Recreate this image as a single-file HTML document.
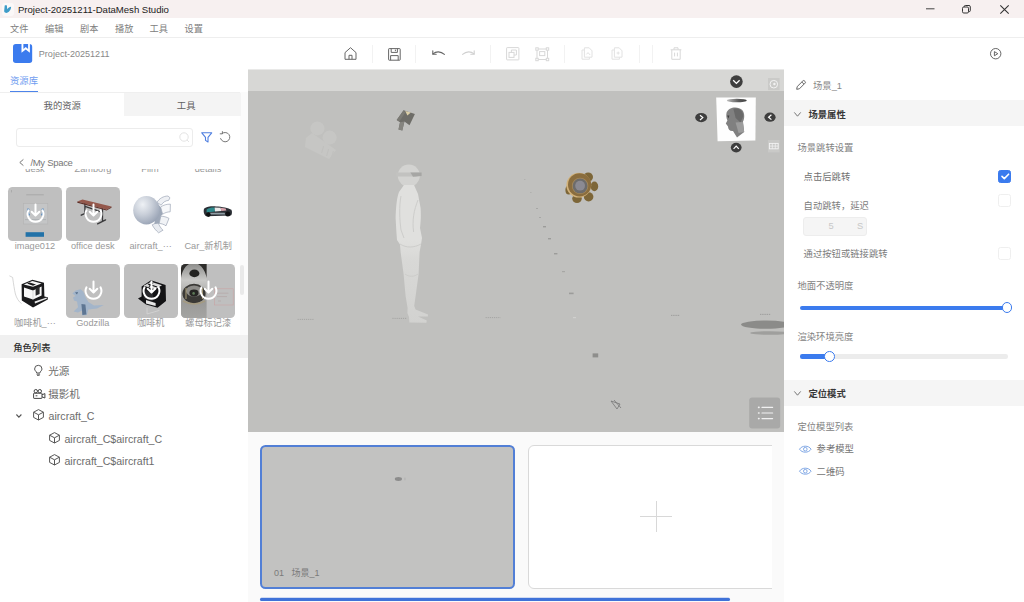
<!DOCTYPE html>
<html lang="zh">
<head>
<meta charset="utf-8">
<title>Project-20251211-DataMesh Studio</title>
<style>
*{box-sizing:border-box;margin:0;padding:0}
html,body{width:1024px;height:602px;overflow:hidden;background:#fff}
body{position:relative;font-family:"Liberation Sans","Noto Sans CJK SC",sans-serif;font-size:9.33px;color:#666}
.a{position:absolute}
.t{position:absolute;white-space:nowrap;line-height:12px;margin-top:-6px}
.c{text-align:center}
svg{position:absolute;overflow:visible}
/* title bar */
#titlebar{left:0;top:0;width:1024px;height:17.5px;background:#f7f0f0}
#menubar{left:0;top:18px;width:1024px;height:19.5px;background:#fff;border-bottom:1px solid #eee}
.menu{color:#808080;font-size:9.2px}
/* left panel */
#left{left:0;top:38px;width:248px;height:564px}
.thumb{position:absolute;width:54px;height:53.6px;border-radius:4.6px;overflow:hidden}
.thumb.g{background:#bfbfbf}
.lbl{position:absolute;width:58px;text-align:center;white-space:nowrap;line-height:12px;color:#999;font-size:9.2px}
.tree{font-size:10.6px;color:#6c6c6c}
/* viewport */
#vp{left:248px;top:70px;width:536px;height:362px;background:#c0c0be;overflow:hidden;box-shadow:0 -1px 0 rgba(215,215,213,.55)}
#vpstrip{left:0;top:0;width:536px;height:20.6px;background:#d7d7d5}
/* timeline */
#tl{left:248px;top:431.5px;width:536px;height:170.5px;background:#fafafa;overflow:hidden}
/* right */
#right{left:784px;top:70px;width:240px;height:532px;background:#fff}
.sec{position:absolute;left:0;width:240px;height:26px;background:#f5f5f5}
.b{font-weight:bold;color:#383838}
.cb{position:absolute;left:214px;width:13px;height:13px;border-radius:2.5px;border:1px solid #efefef;background:#fff}
.cb.on{background:#3b7bee;border-color:#3b7bee}
</style>
</head>
<body>
<!-- TITLE BAR -->
<div id="titlebar" class="a">
  <div class="a" style="left:1.5px;top:2.5px;width:12px;height:13px;border-radius:3px;background:#fff;opacity:.55"></div>
  <svg style="left:0;top:0" width="16" height="18" viewBox="0 0 16 18"><path d="M4.7 5.4 C5.5 5 6.5 5.1 6.9 5.6 L7.2 9.3 C8.2 7.8 9.6 6.8 11.1 6.7 C11 9.8 9 12.5 6.1 12.9 C4.7 12.8 4 12 4.2 10.6 Z" fill="#3e9cc8"/></svg>
  <div class="t" style="left:18px;top:9.5px;font-size:9.6px;letter-spacing:-.03px;color:#222">Project-20251211-DataMesh Studio</div>
  <svg style="left:926px;top:8px" width="9" height="2"><rect width="8.5" height="1" y=".3" fill="#444"/></svg>
  <svg style="left:962px;top:4.5px" width="9" height="9" viewBox="0 0 9 9" fill="none" stroke="#333" stroke-width="1"><rect x=".5" y="2" width="6" height="6" rx="1.3"/><path d="M2.2 2 V1.6 Q2.2 .5 3.3 .5 H7 Q8.3 .5 8.3 1.8 V5.6 Q8.3 6.6 7.3 6.6 H6.6"/></svg>
  <svg style="left:1000px;top:4.5px" width="9" height="9" viewBox="0 0 9 9" stroke="#333" stroke-width="1.1"><path d="M.3 .3 L8.7 8.7 M8.7 .3 L.3 8.7"/></svg>
</div>
<!-- MENU BAR -->
<div id="menubar" class="a">
  <div class="t menu" style="left:10px;top:10.5px">文件</div>
  <div class="t menu" style="left:45px;top:10.5px">编辑</div>
  <div class="t menu" style="left:80px;top:10.5px">剧本</div>
  <div class="t menu" style="left:115px;top:10.5px">播放</div>
  <div class="t menu" style="left:149.5px;top:10.5px">工具</div>
  <div class="t menu" style="left:184.5px;top:10.5px">设置</div>
</div>
<!-- TOOLBAR -->
<div id="toolbar" class="a" style="left:0;top:38px;width:1024px;height:32px;background:#fff">
  <!-- project icon -->
  <svg style="left:13px;top:6px" width="19.2" height="19" viewBox="0 0 19.2 19"><rect x="0" y="0" width="19.2" height="19" rx="2.8" fill="#3b7bee"/><path d="M8.5 0 H16.9 V8.7 L12.7 5.6 L8.5 8.7 Z" fill="#fff"/><path d="M10.4 0 H15.1 V5 L12.75 2.9 L10.4 5 Z" fill="#3b7bee"/></svg>
  <div class="t" style="left:38.8px;top:16px;font-size:9.05px;color:#888">Project-20251211</div>
  <!-- home -->
  <svg style="left:343.5px;top:9px" width="13" height="13" viewBox="0 0 13 13" fill="none" stroke="#666" stroke-width="1" stroke-linejoin="round"><path d="M1 5.6 L6.5 .7 L12 5.6 V12.3 H1 Z"/><path d="M5 12.3 V8.3 H8 V12.3"/></svg>
  <div class="a" style="left:371.5px;top:6.5px;width:1px;height:18px;background:#f2f2f2"></div>
  <!-- save -->
  <svg style="left:388px;top:9.5px" width="13" height="13" viewBox="0 0 13 13" fill="none" stroke="#666" stroke-width="1" stroke-linejoin="round"><rect x=".6" y=".6" width="11.6" height="11.6" rx=".6"/><path d="M3.2 .6 V4.4 H9.4 V.6 M7.4 1.6 V3.2 M2.6 12.2 V7.6 H10.2 V12.2"/></svg>
  <div class="a" style="left:415.2px;top:6.5px;width:1px;height:18px;background:#f2f2f2"></div>
  <!-- undo -->
  <svg style="left:431.5px;top:12px" width="13" height="8" viewBox="0 0 13 8" fill="none" stroke="#666" stroke-width="1.1" stroke-linecap="round" stroke-linejoin="round"><path d="M1 3.8 C4 1.2 8.6 1 12.4 4.4"/><path d="M.8 .8 V4.2 H4.2"/></svg>
  <!-- redo -->
  <svg style="left:462px;top:12px" width="13" height="8" viewBox="0 0 13 8" fill="none" stroke="#d0d0d0" stroke-width="1.1" stroke-linecap="round" stroke-linejoin="round"><path d="M12 3.8 C9 1.2 4.4 1 .6 4.4"/><path d="M12.2 .8 V4.2 H8.8"/></svg>
  <div class="a" style="left:489.8px;top:6.5px;width:1px;height:18px;background:#f2f2f2"></div>
  <!-- copy-like -->
  <svg style="left:505.5px;top:9px" width="13.5" height="13.5" viewBox="0 0 13.5 13.5" fill="none" stroke="#d8d8d8" stroke-width="1"><rect x=".6" y=".6" width="12.3" height="12.3" rx=".6"/><rect x="3" y="5.4" width="5" height="5"/><path d="M5.4 5.4 V3 H10.4 V8 H8"/></svg>
  <!-- group -->
  <svg style="left:535px;top:8.5px" width="14.5" height="14.5" viewBox="0 0 14.5 14.5" fill="none" stroke="#d8d8d8" stroke-width="1"><rect x="2" y="2" width="10.5" height="10.5"/><rect x="4.6" y="4.6" width="5.2" height="4"/><rect x=".8" y=".8" width="2.4" height="2.4" fill="#fff"/><rect x="11.3" y=".8" width="2.4" height="2.4" fill="#fff"/><rect x=".8" y="11.3" width="2.4" height="2.4" fill="#fff"/><rect x="11.3" y="11.3" width="2.4" height="2.4" fill="#fff"/></svg>
  <div class="a" style="left:564.2px;top:6.5px;width:1px;height:18px;background:#f2f2f2"></div>
  <!-- paste a -->
  <svg style="left:581px;top:9px" width="12" height="13" viewBox="0 0 12 13" fill="none" stroke="#e2e2e2" stroke-width="1" stroke-linejoin="round"><path d="M3.4 .8 H8.2 L11 3.8 V10.2 H3.4 Z"/><path d="M3.4 3 H1 V12.2 H8.4 V10.2"/><path d="M5.4 7.4 L7 5.6 L9.2 8"/></svg>
  <svg style="left:611px;top:9px" width="12" height="13" viewBox="0 0 12 13" fill="none" stroke="#e2e2e2" stroke-width="1" stroke-linejoin="round"><path d="M3.4 .8 H8.2 L11 3.8 V10.2 H3.4 Z"/><path d="M3.4 3 H1 V12.2 H8.4 V10.2"/><path d="M5.6 6 H8.6 M7.2 4.6 V7.6"/></svg>
  <div class="a" style="left:638.5px;top:6.5px;width:1px;height:18px;background:#f2f2f2"></div>
  <div class="a" style="left:652.3px;top:6.5px;width:1px;height:18px;background:#f2f2f2"></div>
  <!-- trash -->
  <svg style="left:669.5px;top:9px" width="12" height="13" viewBox="0 0 12 13" fill="none" stroke="#d8d8d8" stroke-width="1" stroke-linejoin="round"><path d="M.6 2.8 H11.4 M4 2.6 V.8 H8 V2.6 M1.8 2.8 V12.3 H10.2 V2.8 M4.6 5.6 V9.4 M7.4 5.6 V9.4"/></svg>
  <!-- play -->
  <svg style="left:990.3px;top:9.6px" width="11.4" height="11.4" viewBox="0 0 11.4 11.4" fill="none" stroke="#555" stroke-width=".9" stroke-linejoin="round"><circle cx="5.7" cy="5.7" r="5.2"/><path d="M4.4 3.6 L7.8 5.7 L4.4 7.8 Z"/></svg>
</div>
<!-- LEFT PANEL -->
<div id="left" class="a">
  <!-- y offset: panel top = 38 -->
  <div class="t" style="left:10px;top:42.5px;color:#6f9cf0">资源库</div>
  <div class="a" style="left:0;top:54px;width:241px;height:1px;background:#efefef"></div>
  <div class="a" style="left:9.5px;top:52.6px;width:28px;height:1.4px;background:#4d84ea"></div>
  <div class="a" style="left:240.4px;top:54px;width:7.4px;height:243.5px;background:#fbfbfb"></div>
  <!-- tabs -->
  <div class="a" style="left:124px;top:55px;width:117px;height:23.3px;background:#f4f4f4"></div>
  <div class="t" style="left:43.6px;top:68px;color:#606060">我的资源</div>
  <div class="t" style="left:176.8px;top:68px;color:#606060">工具</div>
  <!-- search -->
  <div class="a" style="left:16px;top:89.6px;width:176.8px;height:19.2px;border:1px solid #ececec;border-radius:3px"></div>
  <svg style="left:179px;top:94px" width="11" height="11" viewBox="0 0 11 11" fill="none" stroke="#e4e4e4" stroke-width="1"><circle cx="5" cy="5" r="4.2"/><path d="M8 8 L10 10"/></svg>
  <svg style="left:201px;top:94px" width="11.5" height="11" viewBox="0 0 11.5 11" fill="none" stroke="#4f7fe0" stroke-width="1.1" stroke-linejoin="round"><path d="M.8 .8 H10.7 L7 5.4 V10 L4.5 8.4 V5.4 Z"/></svg>
  <svg style="left:219.2px;top:92.8px" width="12" height="12" viewBox="0 0 12 12" fill="none" stroke="#767676" stroke-width="1" stroke-linecap="round" stroke-linejoin="round"><path d="M3.2 2.4 A4.7 4.7 0 1 1 1.6 7.6"/><path d="M3.4 .6 V2.8 H1.2" /></svg>
  <!-- breadcrumb -->
  <svg style="left:18.6px;top:121.3px" width="5" height="7" viewBox="0 0 5 7" fill="none" stroke="#777" stroke-width="1"><path d="M4.4 .4 L.8 3.5 L4.4 6.6"/></svg>
  <div class="t" style="left:30.4px;top:124.6px;font-size:9.5px;letter-spacing:-.3px;color:#777">/My Space</div>
  <!-- grid (clipped) -->
  <div class="a" id="grid" style="left:0;top:130.5px;width:240px;height:166px;overflow:hidden">
    <!-- grid y offset = 168.5 -->
    <div class="lbl" style="left:6px;top:-5.5px">desk</div>
    <div class="lbl" style="left:64px;top:-5.5px">Zamborg</div>
    <div class="lbl" style="left:121px;top:-5.5px">Film</div>
    <div class="lbl" style="left:179px;top:-5.5px">details</div>
    <!-- row 1 -->
    <div class="thumb g" style="left:8px;top:18.6px"><svg width="54" height="54" viewBox="0 0 54 54"><rect x="3" y="3" width="1" height="2.4" fill="#aaa"/><rect x="18.2" y="7.3" width="17.6" height="1" fill="#a9a9a9"/><rect x="15.4" y="16.4" width="24.4" height="20.6" fill="#c4c5c6" stroke="#b3b3b3" stroke-width=".6"/><path d="M20.6 21.6 Q19 26 21.4 28.6 M34.4 21.6 Q36 26 33.6 28.6" stroke="#5f8fc0" stroke-width="2.2" fill="none"/><path d="M17 32.6 H38" stroke="#aeb2b6" stroke-width="1"/><rect x="17.6" y="45.2" width="18.4" height="4.6" fill="#2272a8"/><g fill="none" stroke="#fff" stroke-width="2" stroke-linecap="round" stroke-linejoin="round"><path d="M20.5 23.3 A7.9 7.9 0 1 0 34.5 23.3"/><path d="M27.5 17.6 V28.4 M23.7 24.8 L27.5 28.6 L31.3 24.8"/></g></svg></div>
    <div class="thumb g" style="left:65.9px;top:18.6px"><svg width="54" height="54" viewBox="0 0 54 54"><path d="M18.9 16.4 V26.2 M15.2 28.2 L20.2 25.8 M36.5 22 V33.8 M31.6 36.9 L39.6 32.9 M19 19.4 L36.5 25.4" stroke="#3a3a3c" stroke-width="1.3" fill="none" stroke-linecap="round"/><path d="M11.3 14.5 L16.5 12.6 L45.5 19.6 L40.6 22.4 Z" fill="#94584c"/><path d="M11.3 14.5 L40.6 22.4 L40.6 23.6 L11.3 15.7 Z" fill="#5d2e27"/><path d="M40.6 22.4 L45.5 19.6 V20.8 L40.6 23.6 Z" fill="#6b3930"/><g fill="none" stroke="#fff" stroke-width="2" stroke-linecap="round" stroke-linejoin="round"><path d="M20.5 23.3 A7.9 7.9 0 1 0 34.5 23.3"/><path d="M27.5 17.6 V28.4 M23.7 24.8 L27.5 28.6 L31.3 24.8"/></g></svg></div>
    <div class="thumb" style="left:123.7px;top:18.6px"><svg width="54" height="54" viewBox="0 0 54 54"><defs><radialGradient id="sph" cx=".36" cy=".3" r=".8"><stop offset="0" stop-color="#eef1f5"/><stop offset=".45" stop-color="#c9cfd9"/><stop offset="1" stop-color="#929db0"/></radialGradient></defs><g stroke="#8e99ab" stroke-width=".6" stroke-linejoin="round"><path d="M33 15.4 C35 11.6 39.6 9 44 9 L46 10.8 L44.6 13.4 C41.4 13.6 38.8 15.4 37.2 18.2 Z" fill="#eef0f4"/><path d="M36.6 20 C39.4 18 43 17 46.4 17.2 L46.2 24.8 C43.4 24.8 40.8 25.8 38.6 27.2 Z" fill="#f7f8fa"/><path d="M36.8 29.2 C39.6 29.2 42.6 30 45 31.4 L42 38.8 C40 37.4 37.6 36.6 35.2 36.4 Z" fill="#f1f3f6"/><path d="M28.2 37.8 L33.8 35.2 C35.2 38.6 37 41.4 39 43.2 L34.6 45.8 C32 43.6 29.8 41 28.2 37.8 Z" fill="#e9ecf1"/></g><path d="M32.4 15 L36.6 20 L38.6 27.2 L36.8 29.2 L35.2 36.4 L30.4 37 Z" fill="#9ea8b8"/><ellipse cx="22.4" cy="23.2" rx="13.2" ry="14.2" fill="url(#sph)"/></svg></div>
    <div class="thumb" style="left:181.2px;top:18.6px"><svg width="54" height="54" viewBox="0 0 54 54"><path d="M23.2 21.6 C25.6 19.6 30 19.2 35 19.4 C41 19.6 47.6 20.8 50.4 22.8 C51.4 24.6 51 27.6 50 28.6 L25.4 29.2 C22.6 28.4 22.2 23.6 23.2 21.6 Z" fill="#2b2f35"/><path d="M25.6 22.4 C28 20.8 31 20.4 33.6 20.6 L34 24.6 L25.6 25.4 Z" fill="#2e8a8c"/><path d="M33.6 20.6 L39.6 20.8 L40.4 24 L34 24.6 Z" fill="#eaeaea"/><path d="M39.6 20.8 L44.6 21.6 L45.4 23.6 L40.4 24 Z" fill="#d9a3ac"/><path d="M28 25.8 H43.6 L44.4 27.4 H29 Z" fill="#8e9ca3"/><circle cx="27.4" cy="27.6" r="2.3" fill="#0f1012"/><circle cx="46.8" cy="27" r="2.5" fill="#0f1012"/></svg></div>
    <div class="lbl" style="left:6px;top:71.5px">image012</div>
    <div class="lbl" style="left:63.8px;top:71.5px">office desk</div>
    <div class="lbl" style="left:121.7px;top:71.5px">aircraft_···</div>
    <div class="lbl" style="left:179.2px;top:71.5px">Car_新机制</div>
    <!-- row 2 -->
    <div class="thumb" style="left:8px;top:95.5px"><svg width="54" height="54" viewBox="0 0 54 54"><path d="M1.4 11.8 L4.6 13.4 C5.6 20 6.4 26 7.4 30 C8.6 34 10.6 37.6 13.6 39.6" fill="none" stroke="#c6c6c6" stroke-width=".7"/><path d="M13.6 20.2 L24.4 15.8 L36 18.8 L36.4 32.4 L39.8 33.2 L39.8 35.4 L25 43.4 L13.8 36.6 Z" fill="#1a1a1c"/><path d="M15.8 20.4 L24.4 17 L33.6 19.4 L25 22.8 Z" fill="#f6f6f6"/><path d="M21.6 18.4 L28 20.4 L25 21.8 L19 19.6 Z" fill="#1a1a1c"/><path d="M16 23.6 L25 26.6 L33.6 22.6 L33.6 31.4 L25 35.6 L16 32.4 Z" fill="#f8f8f8"/><path d="M25 26.6 V35.6" stroke="#c8c8c8" stroke-width=".6"/><path d="M27.6 24.4 L31.6 22.8 V30 L27.6 31.8 Z" fill="#2a2a2c"/><path d="M26.6 37.4 L38.6 33.6 L38.8 34.8 L27 39.6 Z" fill="#ececec"/></svg></div>
    <div class="thumb g" style="left:65.9px;top:95.5px"><svg width="54" height="54" viewBox="0 0 54 54"><path d="M6.4 29.4 L9.6 26.4 L14.6 25.2 L17.4 27.8 L19.4 33 L22.4 38 L28 41.6 L37.8 41 L31 44.6 L22.4 45.4 L20.8 51 L16 51.6 L16 46.4 L12 48.6 L7.6 47.6 L12 43.2 L11 37.4 L8 36.4 L7 33.4 L9.6 32 Z" fill="#a3b5ca"/><path d="M15.4 40 L19.4 40.6 L20.4 50.6 L16.4 51 Z" fill="#5e7693"/><path d="M9 28.4 L12 28 L11 30.4 Z" fill="#556d8a"/><g fill="none" stroke="#fff" stroke-width="2" stroke-linecap="round" stroke-linejoin="round"><path d="M20.5 23.3 A7.9 7.9 0 1 0 34.5 23.3"/><path d="M27.5 17.6 V28.4 M23.7 24.8 L27.5 28.6 L31.3 24.8"/></g></svg></div>
    <div class="thumb g" style="left:123.7px;top:95.5px"><svg width="54" height="54" viewBox="0 0 54 54"><path d="M23 43.6 V50 L35.4 46.4" fill="none" stroke="#d8d8d8" stroke-width=".7"/><path d="M14 34.4 L17.6 32.6 V22.4 L27 16.2 L41.6 21 L42 37 L33.6 43.8 L22 40.6 Z" fill="#131315"/><path d="M19.6 21.8 L27 17.8 L38 21.2 L31 25.2 Z" fill="#d9d9d9"/><path d="M24 20 L33 23 M29 18.6 L25 22.6" stroke="#131315" stroke-width="1.3"/><path d="M19.6 26 L29 29.4 V37.6 L19.6 34.4 Z" fill="#2a2a2d"/><path d="M22 36 L31.6 39 L31.6 42 L22 39.4 Z" fill="#e6e6e6"/></svg><svg width="54" height="54" viewBox="0 0 54 54" style="left:0;top:0"><g fill="none" stroke="#fff" stroke-width="2" stroke-linecap="round" stroke-linejoin="round"><path d="M20.5 23.3 A7.9 7.9 0 1 0 34.5 23.3"/><path d="M27.5 17.6 V28.4 M23.7 24.8 L27.5 28.6 L31.3 24.8"/></g></svg></div>
    <div class="thumb g" style="left:181.2px;top:95.5px"><svg width="54" height="54" viewBox="0 0 54 54"><defs><linearGradient id="ph" x1="0" y1="0" x2="0" y2="1"><stop offset="0" stop-color="#8e8e8c"/><stop offset=".3" stop-color="#c9c9c7"/><stop offset=".7" stop-color="#9a9a98"/><stop offset="1" stop-color="#a4a4a2"/></linearGradient></defs><rect x="0" y="0" width="25.6" height="54" fill="url(#ph)"/><path d="M0 0 H8 C3 3 1 8 0 14 Z M25.6 0 H17 C22 3 24.6 8 25.6 14 Z" fill="#2e2d2b"/><ellipse cx="13.4" cy="9.4" rx="5" ry="3.8" fill="#232321"/><ellipse cx="13" cy="29.6" rx="11.6" ry="9.8" fill="#3a3936"/><ellipse cx="13" cy="27" rx="8" ry="5.6" fill="#8d8c88"/><ellipse cx="13" cy="29" rx="4.6" ry="3.4" fill="#252523"/><circle cx="12.6" cy="29.4" r="1.3" fill="#5d7a58"/><path d="M5 24 V35 M21.4 24 V35" stroke="#b7a982" stroke-width=".9"/><path d="M2 37 Q13 43 24 37" stroke="#a49a80" stroke-width="1.6" fill="none"/><rect x="33.6" y="24.8" width="18.6" height="16.2" fill="none" stroke="#c9a3a3" stroke-width=".6"/><path d="M36 29.2 H47.4 M36 32.6 H46 M37 37 H40" stroke="#b5a6a6" stroke-width=".7"/><g fill="none" stroke="#fff" stroke-width="2" stroke-linecap="round" stroke-linejoin="round"><path d="M20.5 23.3 A7.9 7.9 0 1 0 34.5 23.3"/><path d="M27.5 17.6 V28.4 M23.7 24.8 L27.5 28.6 L31.3 24.8"/></g></svg></div>
    <div class="lbl" style="left:6px;top:148.5px">咖啡机_···</div>
    <div class="lbl" style="left:63.8px;top:148.5px">Godzilla</div>
    <div class="lbl" style="left:121.7px;top:148.5px">咖啡机</div>
    <div class="lbl" style="left:179.2px;top:148.5px">螺母标记漆</div>
  </div>
  <!-- scrollbar -->
  <div class="a" style="left:240.4px;top:227px;width:3.4px;height:30px;border-radius:2px;background:#e9e9e9"></div>
  <!-- role list header -->
  <div class="a" style="left:0;top:297px;width:247.5px;height:23px;background:#f0f0f0"></div>
  <div class="t" style="left:13.2px;top:310.2px;color:#2e2e2e;font-weight:500">角色列表</div>
  <!-- tree -->
  <svg style="left:34px;top:326.8px" width="8.6" height="11" viewBox="0 0 8.6 11" fill="none" stroke="#555" stroke-width="1" stroke-linecap="round"><path d="M2.7 7.6 C2.7 6.4 .6 5.8 .6 4 A3.7 3.7 0 0 1 8 4 C8 5.8 5.9 6.4 5.9 7.6 Z"/><path d="M2.9 9.2 H5.7 M3.4 10.4 H5.2" stroke-width=".9"/></svg>
  <div class="t tree" style="left:48.2px;top:333.3px">光源</div>
  <svg style="left:32.5px;top:350.5px" width="12.5" height="10" viewBox="0 0 12.5 10" fill="none" stroke="#444" stroke-width="1" stroke-linejoin="round"><circle cx="2.8" cy="2.2" r="1.7"/><circle cx="6.8" cy="2.2" r="1.7"/><rect x=".6" y="4.2" width="8.4" height="5.2" rx=".5"/><path d="M9 5.8 L11.9 4.6 V9 L9 7.8"/><path d="M2.6 6.8 H4.4"/></svg>
  <div class="t tree" style="left:48.2px;top:355.8px">摄影机</div>
  <svg style="left:16.4px;top:375.8px" width="5.8" height="3.8" viewBox="0 0 5.8 3.8" fill="none" stroke="#555" stroke-width="1.1"><path d="M.4 .5 L2.9 3.1 L5.4 .5"/></svg>
  <svg style="left:33px;top:371.2px" width="11" height="11.6" viewBox="0 0 11 11.6" fill="none" stroke="#555" stroke-width="1" stroke-linejoin="round"><path d="M5.5 .6 L10.4 3.2 V8.4 L5.5 11 L.6 8.4 V3.2 Z"/><path d="M.6 3.2 L5.5 5.8 L10.4 3.2 M5.5 5.8 V11"/></svg>
  <div class="t tree" style="left:48.6px;top:378.3px">aircraft_C</div>
  <svg style="left:48.8px;top:393.8px" width="11" height="11.6" viewBox="0 0 11 11.6" fill="none" stroke="#555" stroke-width="1" stroke-linejoin="round"><path d="M5.5 .6 L10.4 3.2 V8.4 L5.5 11 L.6 8.4 V3.2 Z"/><path d="M.6 3.2 L5.5 5.8 L10.4 3.2 M5.5 5.8 V11"/></svg>
  <div class="t tree" style="left:64.4px;top:400.8px">aircraft_C$aircraft_C</div>
  <svg style="left:48.8px;top:416.3px" width="11" height="11.6" viewBox="0 0 11 11.6" fill="none" stroke="#555" stroke-width="1" stroke-linejoin="round"><path d="M5.5 .6 L10.4 3.2 V8.4 L5.5 11 L.6 8.4 V3.2 Z"/><path d="M.6 3.2 L5.5 5.8 L10.4 3.2 M5.5 5.8 V11"/></svg>
  <div class="t tree" style="left:64.4px;top:423.3px">aircraft_C$aircraft1</div>
</div>
<!-- VIEWPORT -->
<div id="vp" class="a">
  <div id="vpstrip" class="a"></div>
  <!-- offsets: x 248, y 70 -->
  <svg style="left:0;top:0" width="536" height="362" viewBox="248 70 536 362">
    <defs>
      <linearGradient id="fig" x1="0" y1="0" x2="0" y2="1"><stop offset="0" stop-color="#e0e0de"/><stop offset=".4" stop-color="#e0e0de"/><stop offset=".55" stop-color="#d8d8d6"/><stop offset="1" stop-color="#d2d2d0"/></linearGradient>
      <radialGradient id="gold" cx=".5" cy=".5" r=".5"><stop offset=".55" stop-color="#8a6a30"/><stop offset="1" stop-color="#c79a48"/></radialGradient>
    </defs>
    <!-- faint camera ghost -->
    <g fill="#c6c6c4"><circle cx="317.4" cy="128.4" r="7"/><circle cx="329.6" cy="137.6" r="7"/><path d="M306 138 L312 133 L336 150 L329 159 L305 147 Z"/></g>
    <g stroke="#c0c0be" stroke-width="1"><path d="M323.6 146 L321.6 153 M328.6 149 L326.6 156 M333.4 151 L331.4 158"/></g>
    <!-- light fixture -->
    <g><path d="M396.7 119.9 L403.6 110.3 L414.9 113.9 L409.5 125.3 L404.4 121.6 L402.3 130.4 L398.5 129.5 L400 122.3 Z" fill="#6e6d68"/><path d="M396.7 119.9 L403.6 110.3 L405.4 112.4 L399.4 121.6 Z" fill="#7b7a74"/><path d="M400 122.3 L404.4 121.6 L402.3 130.4 L398.5 129.5 Z" fill="#85847f"/><path d="M405.2 111 L410.8 112.5 L407.4 115.4 Z" fill="#dccfa8"/></g>
    <!-- figure -->
    <ellipse cx="408.8" cy="175.6" rx="11" ry="11" fill="#d3d3d1"/>
    <path d="M404 185 L399 192 C396.6 198 396 208 395.6 218 L396.4 232 L397 240 L400 244.6 L400.6 252 L403.6 274 L405.6 296 L407.6 308 L407.4 313 L409 317 L409.4 322.6 L426.4 322.8 L426.8 320.6 L418 316.6 L427.8 316.4 L428 314.4 L415.6 309.6 L414.2 306 L415.6 296 L418.6 274 L419.6 252 L421 244.6 L422 238 L420 228 C421 220 421 214 420.6 208 L418 194 L414 185 Z" fill="url(#fig)"/>
    <g fill="none" stroke="#cdcdcb" stroke-width="1"><path d="M401 196 C399 206 399.6 220 401 230 L404 238"/><path d="M418 200 C414 210 412 220 413.6 232"/><path d="M400 244 C406 248 414 248 421 244"/></g>
    <path d="M405 274 C409 277 414 277 418 274" fill="none" stroke="#c9c9c7" stroke-width=".8"/>
    <path d="M396.2 172.4 H421.6 V175.6 L416 176.4 H396.2 Z" fill="#c2c2c0"/><path d="M410.4 172.4 H421.6 V176 L413 176.8 Z" fill="#a6a6a4"/>
    <g stroke="#a2a2a0" stroke-width=".9" stroke-dasharray="1.2 .9"><path d="M392.4 318.4 h14"/><path d="M297.6 319.4 h16"/><path d="M485.6 317.6 h15"/></g>
    <!-- gear / nut -->
    <g><g fill="#7d6638"><ellipse cx="588.2" cy="177" rx="4.8" ry="4.6"/><ellipse cx="594.4" cy="186.4" rx="3.8" ry="4.8"/><ellipse cx="588.6" cy="196.8" rx="4.8" ry="4.6"/><ellipse cx="577" cy="198.6" rx="4.8" ry="4.4"/><ellipse cx="568.8" cy="190" rx="3.4" ry="4.6"/></g><circle cx="578.8" cy="185.2" r="12.4" fill="#d2b27a"/><circle cx="579.6" cy="184.8" r="11.6" fill="#8a6d3e"/><circle cx="580.1" cy="185.9" r="8.2" fill="#a3875a"/><circle cx="580.1" cy="185.9" r="7.4" fill="#6d6c6b"/><circle cx="580.1" cy="185.7" r="4.9" fill="#8b8a92"/></g>
    <!-- dotted trail -->
    <g fill="#9c9c9a"><rect x="524" y="179" width="1.4" height=".8" opacity=".5"/><rect x="530" y="192" width="1.6" height=".8" opacity=".5"/><rect x="536" y="208" width="2" height="1" opacity=".7"/><rect x="539" y="217" width="2" height="1" opacity=".7"/><rect x="543" y="226" width="3" height="1.4"/><rect x="548" y="238" width="3" height="1.4"/><rect x="554" y="253" width="3.4" height="1.4"/><rect x="562" y="271" width="3" height="1.2" opacity=".7"/><rect x="569" y="292.6" width="4.6" height="1.6"/><rect x="573" y="317" width="3" height="1.2" fill="#d0d0ce"/><rect x="592.6" y="353.4" width="5.6" height="4" fill="#8e8e8c"/></g>
    <path d="M611 401 L620 404 L617 409 Z M614 400 L621 408" stroke="#777" stroke-width=".8" fill="none"/>
    <path d="M671 315.4 h9" stroke="#999" stroke-width=".9" stroke-dasharray="1.4 .8"/>
    <path d="M760 314.4 h11" stroke="#999" stroke-width=".9" stroke-dasharray="1.4 .8"/>
    <!-- shadow blobs right -->
    <ellipse cx="766" cy="324.6" rx="25" ry="4.2" fill="#8b8b89"/><ellipse cx="770" cy="333" rx="20" ry="1.8" fill="#9f9f9d"/>
    <!-- view cube -->
    <defs><linearGradient id="tope" x1="0" y1="0" x2="1" y2="0"><stop offset="0" stop-color="#bdbdbd"/><stop offset=".6" stop-color="#5a5a5a"/><stop offset="1" stop-color="#3f3f3f"/></linearGradient></defs>
    <path d="M716.2 97.6 L755.8 97.4 L755.4 140.4 L717.6 141.2 Z" fill="#fefefe"/>
    <ellipse cx="736.8" cy="100.5" rx="10" ry="1.7" fill="url(#tope)"/>
    <path d="M726.6 112.6 C728.6 106.4 738.4 106 742.2 110 C745 113.4 744.6 118.6 743 121.6 L744.2 132 L737 137.4 L733 131 C730 131.4 728 129.6 728 126.6 L725.8 123.4 L727.4 120.4 C726.2 118 726 115 726.6 112.6 Z" fill="#808080"/>
    <path d="M733.4 109 C738.6 107.4 743.6 110.6 743.2 116.6 L740.4 122.6 L735.6 118 Z" fill="#696969"/><path d="M735.6 122.6 L742.8 122 L744.2 132 L738.6 133 Z" fill="#9c9c9c"/><path d="M727.2 115.6 L729.4 115.4 L728.4 118.6 Z" fill="#3c3c3c"/>
    <!-- nav circles -->
    <circle cx="736.4" cy="81.6" r="6.3" fill="#3e3e3e"/><path d="M733.2 80.2 L736.4 83.4 L739.6 80.2" fill="none" stroke="#fff" stroke-width="1.3"/>
    <ellipse cx="701.2" cy="117.6" rx="6" ry="4.6" fill="#3e3e3e"/><path d="M700 115.2 L702.8 117.6 L700 120" fill="none" stroke="#fff" stroke-width="1.2"/>
    <ellipse cx="770" cy="117.2" rx="5.6" ry="4.6" fill="#3e3e3e"/><path d="M771.4 114.8 L768.6 117.2 L771.4 119.6" fill="none" stroke="#fff" stroke-width="1.2"/>
    <ellipse cx="736.2" cy="147.6" rx="5.4" ry="4.8" fill="#3e3e3e"/><path d="M733.6 148.8 L736.2 146.2 L738.8 148.8" fill="none" stroke="#fff" stroke-width="1.2"/>
    <!-- small tiles -->
    <rect x="768" y="78" width="11.6" height="12.2" fill="#cacac8"/><circle cx="773.8" cy="84.2" r="3.8" fill="none" stroke="#f2f2f2" stroke-width="1"/><circle cx="774.4" cy="84" r="1.2" fill="#f2f2f2"/>
    <rect x="768" y="140" width="11.6" height="12.4" fill="#c9c9c7"/><rect x="769.4" y="143.4" width="8.8" height="5.4" fill="none" stroke="#f4f4f4" stroke-width=".9"/><path d="M772.3 143.4 V148.8 M775.3 143.4 V148.8 M769.4 146.1 H778.2" stroke="#f4f4f4" stroke-width=".7"/>
    <!-- list button -->
    <rect x="749.2" y="397.4" width="31" height="31" rx="3" fill="#a9a9a8"/>
    <g stroke="#f1f1f1" stroke-width="1.2" stroke-linecap="round"><path d="M762 407.4 H772.6 M762 413 H772.6 M762 418.6 H772.6"/><path d="M758.6 407.4 h.4 M758.6 413 h.4 M758.6 418.6 h.4" stroke-width="1.6"/></g>
  </svg>
</div>
<!-- TIMELINE -->
<div id="tl" class="a">
  <!-- offsets: x 248, y 431.5 -->
  <div class="a" style="left:0;top:0;width:524px;height:170.5px;overflow:hidden">
    <div class="a" style="left:11.6px;top:13.6px;width:255.6px;height:143.6px;border:2px solid #527fd6;border-radius:5.5px;background:#c2c2c1"></div>
    <svg style="left:145.6px;top:44px" width="14" height="6" viewBox="0 0 14 6"><ellipse cx="4.4" cy="3" rx="3.6" ry="1.9" fill="#8c8c8c"/><rect x="10.6" y="1.6" width=".7" height="2.6" fill="#aaa"/></svg>
    <div class="t" style="left:26px;top:141.2px;font-size:9px;color:#7a7a7a">01&nbsp;&nbsp;&nbsp;场景_1</div>
    <div class="a" style="left:280.4px;top:13.6px;width:260px;height:143.6px;border:1px solid #d9d9d9;border-radius:6px;background:#fff"></div>
    <div class="a" style="left:392.4px;top:84.8px;width:31.6px;height:1px;background:#d8d8d8"></div>
    <div class="a" style="left:407.7px;top:69.4px;width:1px;height:31.6px;background:#d8d8d8"></div>
    <div class="a" style="left:11.6px;top:166.5px;width:470px;height:3px;border-radius:1.5px;background:#3f72d8;box-shadow:0 -.5px 0 rgba(63,114,216,.45)"></div>
  </div>
</div>
<!-- RIGHT PANEL -->
<div id="right" class="a">
  <!-- y offset: 70 -->
  <svg style="left:12px;top:10.2px" width="10" height="10" viewBox="0 0 10 10" fill="none" stroke="#555" stroke-width=".9" stroke-linejoin="round"><path d="M.7 9.3 L1.2 6.6 L6.8 1 A1.2 1.2 0 0 1 8.6 1 L9 1.4 A1.2 1.2 0 0 1 9 3.2 L3.4 8.8 Z"/><path d="M5.8 2 L8 4.2"/></svg>
  <div class="t" style="left:29px;top:15.6px;color:#888">场景_1</div>
  <div class="sec" style="top:30.3px;height:26.2px"></div>
  <svg style="left:9.6px;top:41.8px" width="7" height="5" viewBox="0 0 7 5" fill="none" stroke="#666" stroke-width=".9"><path d="M.3 .4 L3.5 4.2 L6.7 .4"/></svg>
  <div class="t b" style="left:24.4px;top:44.6px">场景属性</div>
  <div class="t" style="left:13.4px;top:78px;color:#828282">场景跳转设置</div>
  <div class="t" style="left:19.6px;top:106.6px;color:#707070">点击后跳转</div>
  <div class="cb on" style="top:100px"><svg style="left:1.6px;top:2.4px" width="8.6" height="7" viewBox="0 0 8.6 7" fill="none" stroke="#fff" stroke-width="1.6" stroke-linecap="round" stroke-linejoin="round"><path d="M1 3.4 L3.3 5.6 L7.6 1.2"/></svg></div>
  <div class="t" style="left:19.6px;top:135.6px;color:#7c7c7c">自动跳转，延迟</div>
  <div class="cb" style="top:124.4px"></div>
  <div class="a" style="left:19px;top:147px;width:64.3px;height:18.8px;border:1px solid #ededed;border-radius:3px;background:#f5f5f5"></div>
  <div class="t" style="left:44.4px;top:156.4px;color:#c8c8c8">5</div>
  <div class="t" style="left:73px;top:156.4px;color:#c8c8c8">S</div>
  <div class="t" style="left:19.6px;top:183.8px;color:#7c7c7c">通过按钮或链接跳转</div>
  <div class="cb" style="top:177px"></div>
  <div class="t" style="left:13.4px;top:215.6px;color:#828282">地面不透明度</div>
  <div class="a" style="left:16px;top:235.6px;width:204px;height:4.4px;border-radius:2.2px;background:#3b7bee"></div>
  <div class="a" style="left:217.6px;top:232.4px;width:10.8px;height:10.8px;border-radius:50%;border:1.5px solid #3b7bee;background:#fff"></div>
  <div class="t" style="left:13.4px;top:267px;color:#828282">渲染环境亮度</div>
  <div class="a" style="left:16px;top:284.3px;width:208px;height:4.4px;border-radius:2.2px;background:#ececec"></div>
  <div class="a" style="left:16px;top:284.3px;width:30px;height:4.4px;border-radius:2.2px;background:#3b7bee"></div>
  <div class="a" style="left:39.8px;top:281.1px;width:10.8px;height:10.8px;border-radius:50%;border:1.5px solid #3b7bee;background:#fff"></div>
  <div class="sec" style="top:310px;height:25.6px"></div>
  <svg style="left:9.6px;top:321.4px" width="7" height="5" viewBox="0 0 7 5" fill="none" stroke="#666" stroke-width=".9"><path d="M.3 .4 L3.5 4.2 L6.7 .4"/></svg>
  <div class="t b" style="left:24.4px;top:323.6px">定位模式</div>
  <div class="t" style="left:13.4px;top:357px;color:#828282">定位模型列表</div>
  <svg style="left:14.9px;top:374.8px" width="12.6" height="8.4" viewBox="0 0 12.6 8.4" fill="none" stroke="#759fe2" stroke-width=".9"><path d="M.5 4.2 C3 .2 9.6 .2 12.1 4.2 C9.6 8.2 3 8.2 .5 4.2 Z"/><circle cx="6.3" cy="4.2" r="1.8"/></svg>
  <div class="t" style="left:32.6px;top:379.4px;color:#737373">参考模型</div>
  <svg style="left:14.9px;top:397px" width="12.6" height="8.4" viewBox="0 0 12.6 8.4" fill="none" stroke="#759fe2" stroke-width=".9"><path d="M.5 4.2 C3 .2 9.6 .2 12.1 4.2 C9.6 8.2 3 8.2 .5 4.2 Z"/><circle cx="6.3" cy="4.2" r="1.8"/></svg>
  <div class="t" style="left:32.6px;top:401.6px;color:#737373">二维码</div>
</div>
</body>
</html>
